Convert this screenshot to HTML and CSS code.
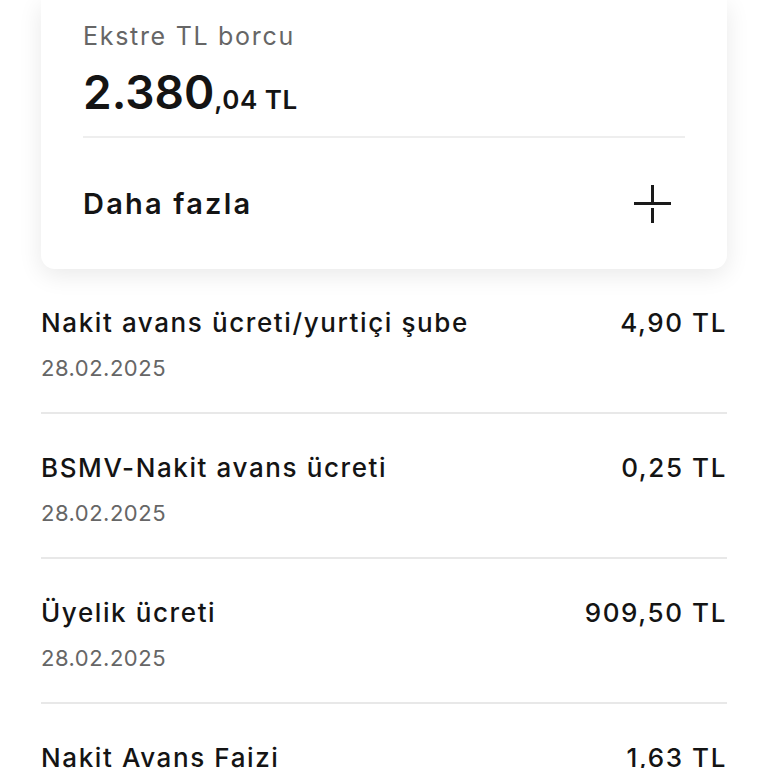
FILE: index.html
```html
<!DOCTYPE html>
<html lang="tr">
<head>
  <meta charset="UTF-8" />
  <meta name="viewport" content="width=device-width, initial-scale=1" />
  <title>Ekstre</title>
  <link rel="stylesheet" href="styles.css">
</head>
<body>

<div class="card">
  <div class="card-label">Ekstre TL borcu</div>
  <div class="card-amount">2.380<span class="cents">,04 TL</span></div>
  <div class="card-more">
    <span>Daha fazla</span>
    <svg class="plus" width="38" height="38" viewBox="0 0 38 38">
      <path d="M0 18.5H37" stroke="#1a1a1a" stroke-width="3" />
      <path d="M18.5 0V17M18.5 23V38" stroke="#1a1a1a" stroke-width="3" />
    </svg>
  </div>
</div>

<ul class="list">
  <li class="row">
    <div class="row-top">
      <span class="row-title">Nakit avans ücreti/yurtiçi şube</span>
      <span class="row-amount">4,90 TL</span>
    </div>
    <div class="row-date">28.02.2025</div>
  </li>
  <li class="row">
    <div class="row-top">
      <span class="row-title">BSMV-Nakit avans ücreti</span>
      <span class="row-amount">0,25 TL</span>
    </div>
    <div class="row-date">28.02.2025</div>
  </li>
  <li class="row">
    <div class="row-top">
      <span class="row-title">Üyelik ücreti</span>
      <span class="row-amount">909,50 TL</span>
    </div>
    <div class="row-date">28.02.2025</div>
  </li>
  <li class="row">
    <div class="row-top">
      <span class="row-title">Nakit Avans Faizi</span>
      <span class="row-amount">1,63 TL</span>
    </div>
    <div class="row-date">28.02.2025</div>
  </li>
</ul>

</body>
</html>
```

FILE: styles.css
```css
body { font-family: Inter, "Noto Sans", sans-serif; margin: 0; padding: 0; background: #fff; color: #141414; }

.card {
  margin: 0 41px;
  padding: 20px 42px 0;
  background: #fff;
  border-radius: 0 0 14px 14px;
  box-shadow: 0 6px 24px rgba(0, 0, 0, 0.09);
}
.card-label { font-size: 25px; line-height: 32px; letter-spacing: 1.7px; color: #666; }
.card-amount { font-size: 46px; line-height: 56px; font-weight: 600; margin-top: 12px; padding-bottom: 16px; border-bottom: 2px solid #eee; }
.card-amount .cents { font-size: 26px; line-height: 1; letter-spacing: 0.5px; }
.card-more { display: flex; justify-content: space-between; align-items: center; height: 131px; font-size: 29px; font-weight: 600; letter-spacing: 2.2px; }
.plus { margin-right: 13px; }

.list { list-style: none; margin: 0; padding: 0 41px; }
.row { padding: 38px 0 30px; border-bottom: 2px solid #e8e8e8; }
.row-top { display: flex; justify-content: space-between; font-size: 26px; line-height: 32px; font-weight: 500; letter-spacing: 1.6px; }
.row-date { font-size: 22px; line-height: 28px; color: #666; margin-top: 15px; letter-spacing: 0.5px; }
```
